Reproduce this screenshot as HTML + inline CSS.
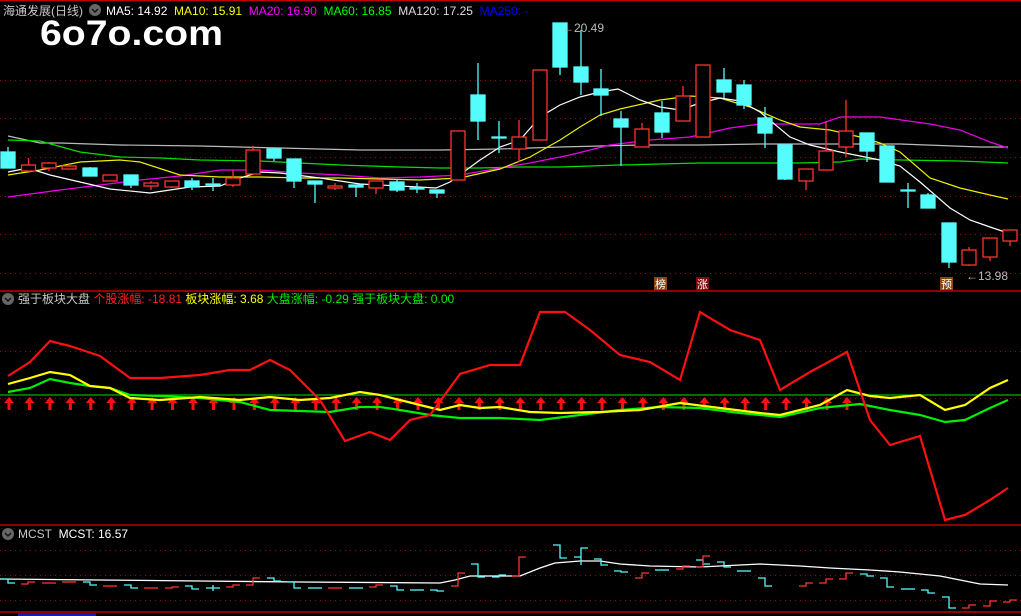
<!DOCTYPE html>
<html><head><meta charset="utf-8"><style>
html,body{margin:0;padding:0;background:#000;width:1021px;height:616px;overflow:hidden;font-family:"Liberation Sans","Noto Sans CJK SC",sans-serif}
svg{position:absolute;left:0;top:0}
.t{position:absolute;font-size:12px;white-space:nowrap;line-height:14px}
</style></head><body>
<svg width="1021" height="616" viewBox="0 0 1021 616">
<g stroke="#8a1010" stroke-dasharray="1,4" stroke-width="1">
<line x1="0" y1="80.5" x2="1021" y2="80.5"/><line x1="0" y1="118.5" x2="1021" y2="118.5"/><line x1="0" y1="157.5" x2="1021" y2="157.5"/><line x1="0" y1="196.5" x2="1021" y2="196.5"/><line x1="0" y1="234.5" x2="1021" y2="234.5"/><line x1="0" y1="273.5" x2="1021" y2="273.5"/>
<line x1="0" y1="351.5" x2="1021" y2="351.5"/><line x1="0" y1="398.5" x2="1021" y2="398.5"/>
<line x1="0" y1="550.5" x2="1021" y2="550.5"/><line x1="0" y1="575.5" x2="1021" y2="575.5"/><line x1="0" y1="600.5" x2="1021" y2="600.5"/>
</g>
<g stroke="#c00000" stroke-width="1.5">
<line x1="0" y1="0.5" x2="1021" y2="0.5"/><line x1="0" y1="291" x2="1021" y2="291"/><line x1="0" y1="525" x2="1021" y2="525"/><line x1="0" y1="612" x2="1021" y2="612"/>
</g>
<rect x="18" y="613" width="78" height="3" fill="#1a1ab0"/>
<g fill="none" stroke-width="1.2">
<polyline stroke="#bbbbbb" points="8,136 40,143 60,143 120,145 200,146 280,148 360,150 440,150 500,149 560,147 640,145 700,145 760,144 840,144 900,144 980,147 1008,147"/>
<polyline stroke="#00e000" points="8,140 40,141 80,152 120,157 160,158 200,160 260,161 300,163 340,165 400,167 440,168 480,168 520,167 560,167 620,165 700,163 800,163 840,162 860,159 900,160 960,161 1008,163"/>
<polyline stroke="#ee00ee" points="8,197 60,190 100,185 140,180 180,176 220,170 260,170 300,173 340,175 380,178 420,177 460,175 500,168 530,163 570,155 610,145 650,140 690,137 730,128 760,124 820,124 840,117 880,117 930,124 960,130 990,142 1008,148"/>
<polyline stroke="#eeee00" points="8,175 40,170 80,162 120,160 140,162 180,175 220,177 260,177 300,178 340,178 380,179 420,180 460,178 500,169 530,157 560,140 580,127 600,115 620,109 660,100 690,96 720,98 750,107 780,120 800,127 830,130 860,137 880,143 900,152 930,178 960,188 990,195 1008,199"/>
<polyline stroke="#ffffff" points="8,172 28,168 50,175 80,182 110,189 150,193 190,187 220,186 240,178 260,172 280,173 320,178 360,184 400,186 436,188 450,182 480,160 500,147 520,140 540,117 560,105 580,97 600,92 618,89 640,100 660,107 680,110 700,103 720,98 740,101 760,112 790,137 810,145 840,152 860,156 880,160 900,166 920,182 950,208 970,220 990,227 1008,233"/>
</g>
<g stroke-width="1.3">
<g stroke="#54fcfc" fill="#54fcfc">
<line x1="8" y1="147" x2="8" y2="168"/><rect x="1" y="152" width="14" height="16"/>
<line x1="90" y1="167" x2="90" y2="176"/><rect x="83" y="168" width="14" height="8"/>
<line x1="131" y1="175" x2="131" y2="188"/><rect x="124" y="175" width="14" height="10"/>
<line x1="192" y1="178" x2="192" y2="190"/><rect x="185" y="181" width="14" height="6"/>
<line x1="213" y1="178" x2="213" y2="191"/><rect x="206" y="184" width="14" height="1"/>
<line x1="274" y1="148" x2="274" y2="161"/><rect x="267" y="149" width="14" height="9"/>
<line x1="294" y1="159" x2="294" y2="188"/><rect x="287" y="159" width="14" height="22"/>
<line x1="315" y1="181" x2="315" y2="203"/><rect x="308" y="181" width="14" height="3"/>
<line x1="356" y1="185" x2="356" y2="197"/><rect x="349" y="185" width="14" height="2"/>
<line x1="397" y1="180" x2="397" y2="192"/><rect x="390" y="182" width="14" height="8"/>
<line x1="417" y1="183" x2="417" y2="193"/><rect x="410" y="188" width="14" height="1"/>
<line x1="437" y1="190" x2="437" y2="198"/><rect x="430" y="190" width="14" height="3"/>
<line x1="478" y1="63" x2="478" y2="140"/><rect x="471" y="95" width="14" height="26"/>
<line x1="499" y1="121" x2="499" y2="153"/><rect x="492" y="137" width="14" height="1"/>
<line x1="560" y1="23" x2="560" y2="75"/><rect x="553" y="23" width="14" height="44"/>
<line x1="581" y1="30" x2="581" y2="95"/><rect x="574" y="67" width="14" height="15"/>
<line x1="601" y1="69" x2="601" y2="116"/><rect x="594" y="89" width="14" height="6"/>
<line x1="621" y1="111" x2="621" y2="166"/><rect x="614" y="119" width="14" height="8"/>
<line x1="662" y1="101" x2="662" y2="138"/><rect x="655" y="113" width="14" height="19"/>
<line x1="724" y1="68" x2="724" y2="98"/><rect x="717" y="80" width="14" height="12"/>
<line x1="744" y1="80" x2="744" y2="109"/><rect x="737" y="85" width="14" height="20"/>
<line x1="765" y1="107" x2="765" y2="148"/><rect x="758" y="118" width="14" height="15"/>
<line x1="785" y1="145" x2="785" y2="180"/><rect x="778" y="145" width="14" height="34"/>
<line x1="867" y1="133" x2="867" y2="162"/><rect x="860" y="133" width="14" height="18"/>
<line x1="887" y1="146" x2="887" y2="182"/><rect x="880" y="146" width="14" height="36"/>
<line x1="908" y1="183" x2="908" y2="208"/><rect x="901" y="190" width="14" height="1"/>
<line x1="928" y1="193" x2="928" y2="208"/><rect x="921" y="195" width="14" height="13"/>
<line x1="949" y1="223" x2="949" y2="268"/><rect x="942" y="223" width="14" height="39"/>
</g>
<g stroke="#ff3232" fill="#000">
<line x1="28.5" y1="158" x2="28.5" y2="173"/><rect x="21.5" y="165" width="14" height="6"/>
<line x1="49" y1="162" x2="49" y2="171"/><rect x="42" y="163" width="14" height="5"/>
<line x1="69" y1="163" x2="69" y2="169"/><rect x="62" y="166" width="14" height="3"/>
<line x1="110" y1="175" x2="110" y2="181"/><rect x="103" y="175" width="14" height="6"/>
<line x1="151" y1="181" x2="151" y2="190"/><rect x="144" y="183" width="14" height="3"/>
<line x1="172" y1="181" x2="172" y2="188"/><rect x="165" y="181" width="14" height="6"/>
<line x1="233" y1="170" x2="233" y2="187"/><rect x="226" y="178" width="14" height="7"/>
<line x1="253" y1="146" x2="253" y2="174"/><rect x="246" y="150" width="14" height="24"/>
<line x1="335" y1="183" x2="335" y2="190"/><rect x="328" y="186" width="14" height="2"/>
<line x1="376" y1="181" x2="376" y2="194"/><rect x="369" y="181" width="14" height="7"/>
<rect x="451" y="131" width="14" height="49"/>
<line x1="519" y1="120" x2="519" y2="162"/><rect x="512" y="137" width="14" height="12"/>
<rect x="533" y="70" width="14" height="70"/>
<line x1="642" y1="123" x2="642" y2="147"/><rect x="635" y="129" width="14" height="18"/>
<line x1="683" y1="86" x2="683" y2="121"/><rect x="676" y="96" width="14" height="25"/>
<rect x="696" y="65" width="14" height="72"/>
<line x1="806" y1="169" x2="806" y2="190"/><rect x="799" y="169" width="14" height="12"/>
<line x1="826" y1="121" x2="826" y2="170"/><rect x="819" y="151" width="14" height="19"/>
<line x1="846" y1="100" x2="846" y2="157"/><rect x="839" y="131" width="14" height="16"/>
<line x1="969" y1="247" x2="969" y2="266"/><rect x="962" y="250" width="14" height="15"/>
<line x1="990" y1="238" x2="990" y2="261"/><rect x="983" y="238" width="14" height="19"/>
<line x1="1010" y1="230" x2="1010" y2="246"/><rect x="1003" y="230" width="14" height="11"/>
</g>
</g>
<rect x="654" y="277" width="13" height="13" fill="#8b4513"/><rect x="696" y="277" width="13" height="13" fill="#7a0c0c"/><rect x="940" y="277" width="13" height="13" fill="#8b4513"/>
<text x="655" y="288" font-size="11" fill="#fff" font-family="Noto Sans CJK SC,sans-serif">榜</text>
<text x="697" y="288" font-size="11" fill="#fff" font-family="Noto Sans CJK SC,sans-serif">涨</text>
<text x="941" y="288" font-size="11" fill="#fff" font-family="Noto Sans CJK SC,sans-serif">预</text>
<text x="562" y="32" font-size="12" fill="#bbb" font-family="Liberation Sans,sans-serif">←20.49</text>
<text x="966" y="280" font-size="12" fill="#bbb" font-family="Liberation Sans,sans-serif">←13.98</text>
<line x1="0" y1="395" x2="1021" y2="395" stroke="#00dd00" stroke-width="1"/>
<g fill="#ff1010" stroke="none">
<path id="ar" d="M0,0 l-5,6 h3.5 v7 h3 v-7 h3.5z" transform="translate(9,397)"/>
<use href="#ar" x="20.45"/><use href="#ar" x="40.9"/><use href="#ar" x="61.35"/><use href="#ar" x="81.8"/><use href="#ar" x="102.25"/><use href="#ar" x="122.7"/><use href="#ar" x="143.15"/><use href="#ar" x="163.6"/><use href="#ar" x="184.05"/><use href="#ar" x="204.5"/><use href="#ar" x="224.95"/><use href="#ar" x="245.4"/><use href="#ar" x="265.85"/><use href="#ar" x="286.3"/><use href="#ar" x="306.75"/><use href="#ar" x="327.2"/><use href="#ar" x="347.65"/><use href="#ar" x="368.1"/><use href="#ar" x="388.55"/><use href="#ar" x="409"/><use href="#ar" x="429.45"/><use href="#ar" x="449.9"/><use href="#ar" x="470.35"/><use href="#ar" x="490.8"/><use href="#ar" x="511.25"/><use href="#ar" x="531.7"/><use href="#ar" x="552.15"/><use href="#ar" x="572.6"/><use href="#ar" x="593.05"/><use href="#ar" x="613.5"/><use href="#ar" x="633.95"/><use href="#ar" x="654.4"/><use href="#ar" x="674.85"/><use href="#ar" x="695.3"/><use href="#ar" x="715.75"/><use href="#ar" x="736.2"/><use href="#ar" x="756.65"/><use href="#ar" x="777.1"/><use href="#ar" x="797.55"/><use href="#ar" x="818"/><use href="#ar" x="838"/>
</g>
<g fill="none" stroke-width="2.2">
<polyline stroke="#00ee00" points="8,392 30,388 50,379 70,383 90,386 110,388 130,395 160,396 200,398 240,402 270,410 300,411 330,412 360,407 380,407 400,410 430,415 460,418 500,418 540,420 580,415 620,410 660,407 700,408 740,413 780,417 820,408 860,404 890,410 920,415 945,422 965,420 990,408 1008,400"/>
<polyline stroke="#ffff00" points="8,384 30,378 50,372 70,375 90,386 110,388 130,398 160,400 200,397 240,400 270,397 300,400 330,398 360,392 380,395 400,400 420,405 440,410 460,405 480,408 500,407 530,412 560,413 600,412 640,410 680,403 720,408 760,413 780,415 820,405 847,390 870,396 890,398 920,395 945,410 965,405 990,388 1008,380"/>
<polyline stroke="#ff1010" points="8,376 30,362 50,341 70,346 100,356 130,378 160,378 200,375 230,370 250,370 270,360 290,370 320,400 345,441 370,432 390,440 410,420 430,415 460,374 490,365 520,365 540,312 565,312 590,330 620,355 650,362 680,380 700,312 730,330 760,340 780,390 810,372 847,352 870,420 890,445 920,436 945,520 965,515 990,500 1008,488"/>
</g>
<polyline fill="none" stroke="#fff" stroke-width="1.3" points="0,579 100,580 200,581 300,582 440,583 455,580 470,576 520,576 540,568 555,563 580,561 600,561 620,564 650,566 700,567 720,566 760,564 800,566 830,568 870,570 900,572 940,576 980,584 1008,585"/>
<g fill="none" stroke-width="1.3">
<g stroke="#54fcfc">
<path d="M1,579H8V583H15"/><path d="M83,582H90V585H97"/><path d="M124,585H131V588H138"/><path d="M185,586H192V589H199"/><path d="M206,588H220M213,585V591"/><path d="M267,578H274V581H281"/><path d="M287,582H294V588H301"/><path d="M308,588H322"/><path d="M349,588H363"/><path d="M390,586H397V590H404"/><path d="M410,590H424"/><path d="M430,590H437V591H444"/><path d="M471,564H478V577H485"/><path d="M492,577H499V575H506"/>
<path d="M553,545H560V558H567"/><path d="M574,557H581V548H588M581,548V565"/><path d="M594,559H601V565H608"/><path d="M614,571H621V572H628"/><path d="M655,570H669"/><path d="M696,560H703V564H710"/><path d="M717,562H724V567H731"/><path d="M737,571H751"/><path d="M758,578H765V586H772"/><path d="M860,574H867V576H874"/><path d="M880,578H887V587H894"/><path d="M901,589H915"/><path d="M921,590H928V593H935"/><path d="M942,597H949V608H956"/>
</g>
<g stroke="#ff3232">
<path d="M21,584H28V582H35"/><path d="M42,583H56"/><path d="M62,582H76"/><path d="M103,586H117"/><path d="M144,588H158"/><path d="M165,588H172V587H179"/><path d="M226,587H233V585H240"/><path d="M246,585H253V578H260"/><path d="M328,588H342"/><path d="M369,587H376V585H383"/><path d="M451,586H458V573H465"/>
<path d="M512,576H519V557H526"/><path d="M635,578H642V573H649"/><path d="M676,569H683V566H690"/><path d="M696,567H703V556H710"/><path d="M799,586H806V583H813"/><path d="M819,583H826V579H833"/><path d="M839,579H846V573H853"/><path d="M962,608H969V605H976"/><path d="M983,606H990V601H997"/><path d="M1003,602H1010V600H1017"/>
</g>
</g>
<circle cx="95" cy="10" r="6" fill="#666"/><path d="M92,9 l3,3 l3,-3" stroke="#111" stroke-width="1.5" fill="none"/>
<circle cx="8" cy="299" r="6" fill="#666"/><path d="M5,298 l3,3 l3,-3" stroke="#111" stroke-width="1.5" fill="none"/>
<circle cx="8" cy="534" r="6" fill="#666"/><path d="M5,533 l3,3 l3,-3" stroke="#111" stroke-width="1.5" fill="none"/>
</svg>
<div class="t" style="left:3px;top:4px;color:#c8c8c8">海通发展(日线)</div>
<div class="t" style="left:106px;top:4px"><span style="color:#fff">MA5: 14.92</span>&nbsp; <span style="color:#ffff00">MA10: 15.91</span>&nbsp; <span style="color:#ff00ff">MA20: 16.90</span>&nbsp; <span style="color:#00ff00">MA60: 16.85</span>&nbsp; <span style="color:#ddd">MA120: 17.25</span>&nbsp; <span style="color:#0000ff">MA250: -</span></div>
<div style="position:absolute;left:40px;top:14px;font:bold 35px 'Liberation Sans',sans-serif;color:#fff;transform:scaleX(1.12);transform-origin:0 0">6o7o.com</div>
<div class="t" style="left:18px;top:292px;color:#c8c8c8">强于板块大盘 <span style="color:#ff2020">个股涨幅: -18.81</span> <span style="color:#ffff00">板块涨幅: 3.68</span> <span style="color:#00ee00">大盘涨幅: -0.29</span> <span style="color:#00ee00">强于板块大盘: 0.00</span></div>
<div class="t" style="left:18px;top:527px;color:#c8c8c8">MCST&nbsp; <span style="color:#fff">MCST: 16.57</span></div>
</body></html>
